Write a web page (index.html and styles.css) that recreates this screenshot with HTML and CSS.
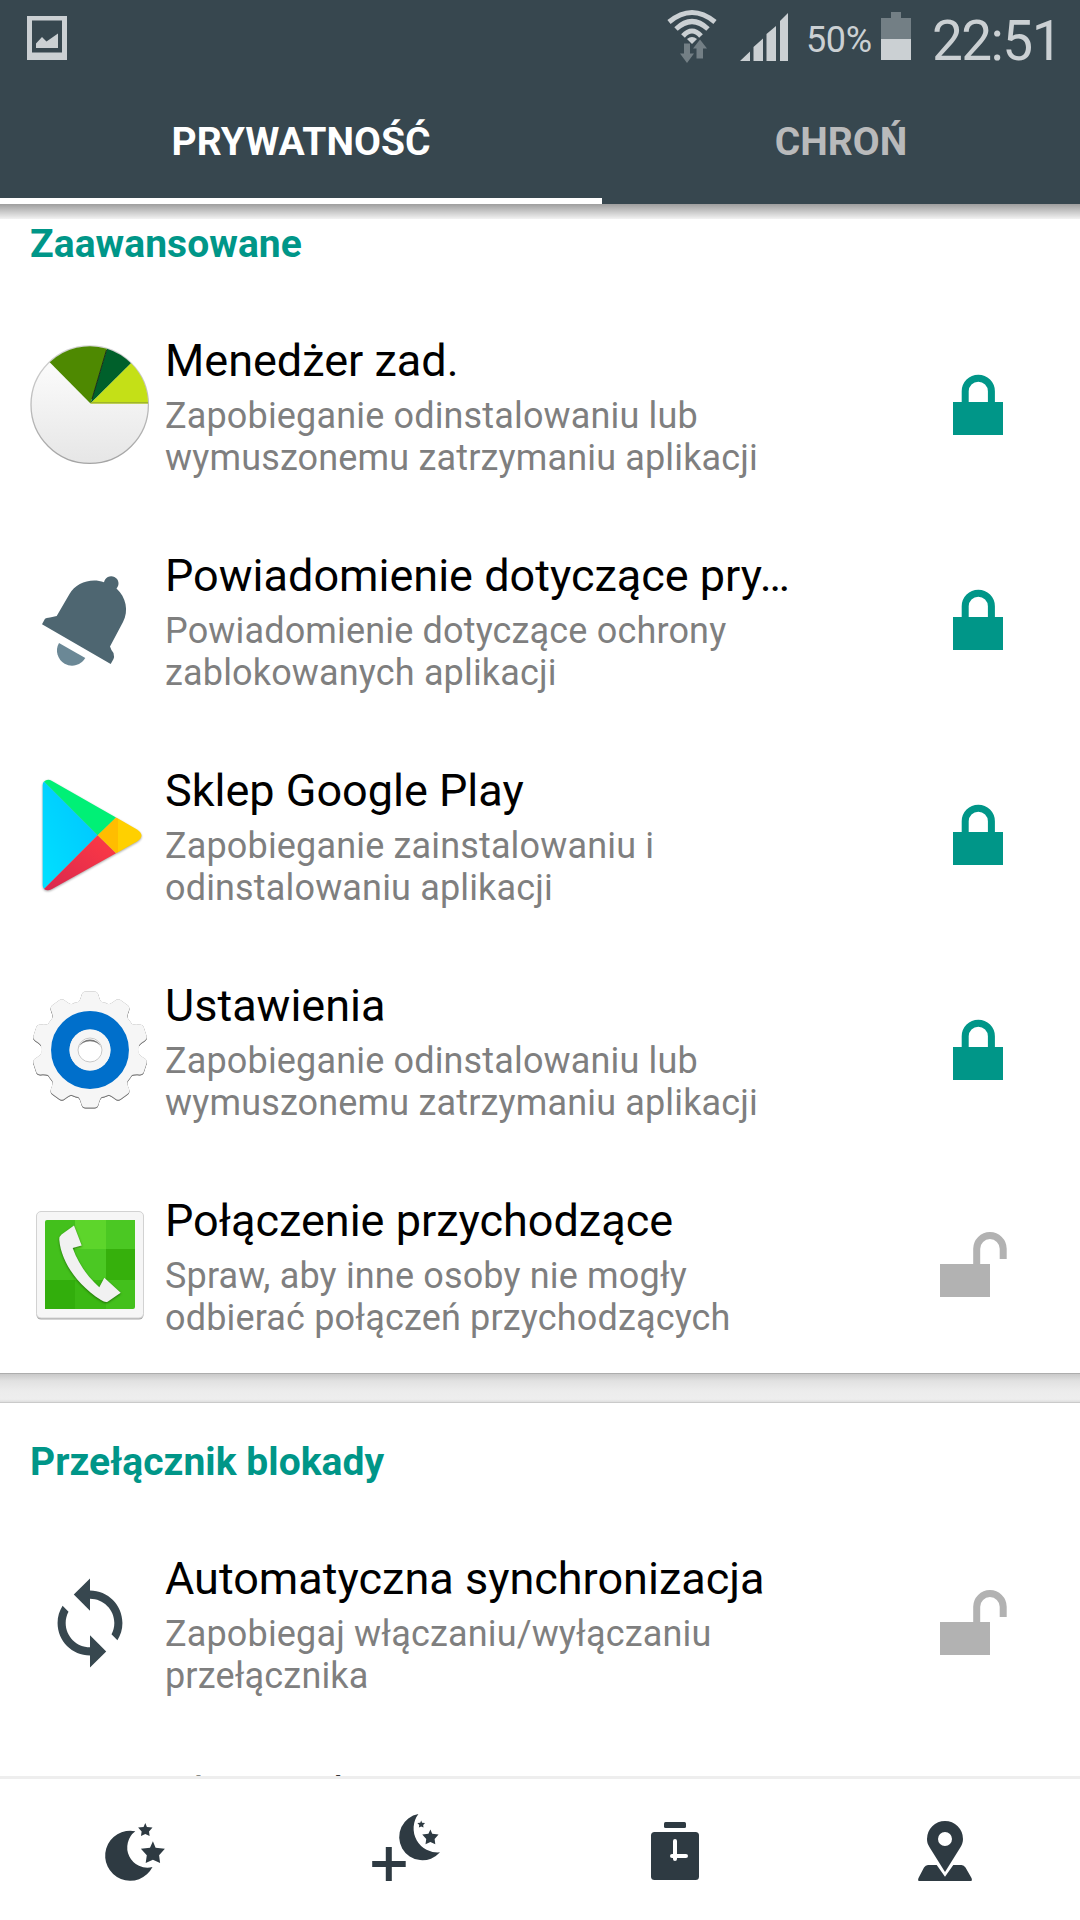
FILE: index.html
```html
<!DOCTYPE html>
<html lang="pl">
<head>
    <meta charset="UTF-8">
    <meta name="viewport" content="width=device-width, initial-scale=1.0">
    <title>Prywatność</title>
    <link rel="stylesheet" href="styles.css">
</head>
<body>
    <!-- shared shapes -->
    <svg class="defs" width="0" height="0">
        <symbol id="locked" viewBox="0 0 90 90">
            <rect x="23" y="44" width="50" height="33" fill="#009688"/>
            <path d="M35.2 45V33.3a13.1 13.1 0 0 1 26.2 0V45" fill="none" stroke="#009688" stroke-width="7"/>
        </symbol>
        <symbol id="unlocked" viewBox="0 0 90 90">
            <rect x="10" y="46" width="50" height="33" fill="#b2b2b2"/>
            <path d="M46.7 47V30.8a13.2 13.2 0 0 1 26.5 0V41" fill="none" stroke="#b2b2b2" stroke-width="7"/>
        </symbol>
        <path id="star" d="M0-13.7 2.7-7.3 12-6.3 6.2.3 7.2 8 0 4.7-7.2 8-6.1.3-12-6.3-2.9-7.3z"/>
        <path id="tooth" d="M-15-45C-11-47-10-49-8.500-54.500Q-7.500-58-4.500-58H4.500Q7.500-58 8.500-54.500C10-49 11-47 15-45z"/>
    </svg>

    <header class="header">
        <div class="status-bar">
            <svg class="picture-icon" width="40" height="44" viewBox="0 0 40 44">
                <path fill="#cbd0d3" fill-rule="evenodd" d="M0 0H40V44H0zM5 4.500V36.500H35V4.500z"/>
                <path fill="#cbd0d3" d="M9 27.500 15 21 19.500 25.500 31 17.500V32H9z"/>
            </svg>
            <div class="status-right">
                <svg width="50" height="56" viewBox="0 0 50 56">
                    <g fill="none" stroke="#cbd0d3" stroke-width="5">
                        <path d="M2 13Q25-6 48 13"/>
                        <path d="M9 20Q25 5 41 20"/>
                        <path d="M16 27Q25 17 34 27"/>
                    </g>
                    <path fill="#cbd0d3" d="M20 30Q25 26 30 30L25 35z"/>
                    <path fill="#737f85" d="M17 34.500H23V44.500H27L20 54 13 44.500H17zM29.500 49.500V39.500H26L33 30.500 40 39.500H36V49.500z"/>
                </svg>
                <svg class="signal" width="48" height="48" viewBox="0 0 48 48">
                    <path fill="#cbd0d3" d="M0 48 10 38.500V48zM13.500 48V34L23 25.500V48zM26.500 48V21L36 13V48zM40 48V8L48 0V48z"/>
                </svg>
                <span class="percent">50%</span>
                <svg class="battery" width="30" height="48" viewBox="0 0 30 48">
                    <path fill="#737f85" d="M10 0H20V6H30V27H0V6H10z"/>
                    <path fill="#cbd0d3" d="M0 27H30V48H0z"/>
                </svg>
                <span class="clock">22:51</span>
            </div>
        </div>
        <div class="tabs">
            <div class="tab active">PRYWATNOŚĆ</div>
            <div class="tab">CHROŃ</div>
        </div>
    </header>

    <main class="list">
        <section class="card first">
            <h2>Zaawansowane</h2>
            <div class="row">
                <svg class="icon" viewBox="0 0 120 120">
                    <defs>
                        <linearGradient id="pie" x1="0" y1="0" x2="0" y2="1">
                            <stop offset="0" stop-color="#fff"/>
                            <stop offset="1" stop-color="#e6e6e6"/>
                        </linearGradient>
                        <linearGradient id="pieEdge" x1="0" y1="0" x2="0" y2="1">
                            <stop offset="0" stop-color="#d4d4d4"/>
                            <stop offset="1" stop-color="#a4a4a4"/>
                        </linearGradient>
                    </defs>
                    <circle cx="59.700" cy="59.700" r="58.700" fill="url(#pie)" stroke="url(#pieEdge)" stroke-width="1.300"/>
                    <path fill="#4e8901" d="M60.500 58.500 19.700 17.300A58.500 58.500 0 0 1 77 3.700z"/>
                    <path fill="#00602b" d="M60.500 58.500 77 3.700A58.500 58.500 0 0 1 101 18.300z"/>
                    <path fill="#c4e017" d="M60.500 58.500 101 18.300A58.500 58.500 0 0 1 118 58.500z"/>
                    <path stroke="#1c2c16" d="M62 54 76.500 5"/>
                    <path stroke="#9fb52a" stroke-width="1.500" d="M61 57.800H118"/>
                </svg>
                <div class="text">
                    <h3>Menedżer zad.</h3>
                    <p>Zapobieganie odinstalowaniu lub wymuszonemu zatrzymaniu aplikacji</p>
                </div>
                <svg class="lock"><use href="#locked"/></svg>
            </div>
            <div class="row">
                <svg class="icon" viewBox="0 0 120 120">
                    <path fill="#4e6671" d="M12 64.300 15 58.800Q16 58 20 57.500L26.700 56 39.500 34C46 23 61 17.500 74 22.300A7.300 7.300 0 1 1 86.500 28.500C96 37 99 51 93 62L80 86.500Q81 90 83.500 93Q84.500 97 83.500 99L80.700 104z"/>
                    <path fill="#6b8896" d="M29 83A14.500 14.500 0 0 0 55.300 98z"/>
                </svg>
                <div class="text">
                    <h3>Powiadomienie dotyczące pry…</h3>
                    <p>Powiadomienie dotyczące ochrony zablokowanych aplikacji</p>
                </div>
                <svg class="lock"><use href="#locked"/></svg>
            </div>
            <div class="row">
                <svg class="icon play" viewBox="0 0 120 120">
                    <defs>
                        <linearGradient id="blue" x1="1" y1="0" x2="0" y2="1">
                            <stop offset="0" stop-color="#00c3ff"/>
                            <stop offset="1" stop-color="#00e1ff"/>
                        </linearGradient>
                        <linearGradient id="red" x1="1" y1="0" x2="0" y2="1">
                            <stop offset="0" stop-color="#ff3a44"/>
                            <stop offset="1" stop-color="#d9284f"/>
                        </linearGradient>
                    </defs>
                    <path fill="url(#blue)" d="M14 6.500Q12.700 7.500 12.700 10V110Q12.700 112.500 14 114L67.700 60.300z"/>
                    <path fill="#00f076" d="M14 6.500Q17.500 3.500 22 6L86 42.400 67.700 60.300z"/>
                    <path fill="url(#red)" d="M14 114Q17.500 116.500 22 114L86 78.300 67.700 60.300z"/>
                    <path fill="#ffbd00" d="M67.700 60.300 86 42.400 88 43.500V77.200L86 78.300z"/>
                    <path fill="#ffd000" d="M88 43.500 107 54.500Q116 60.500 107 66.500L88 77.200z"/>
                </svg>
                <div class="text">
                    <h3>Sklep Google Play</h3>
                    <p>Zapobieganie zainstalowaniu i odinstalowaniu aplikacji</p>
                </div>
                <svg class="lock"><use href="#locked"/></svg>
            </div>
            <div class="row">
                <svg class="icon" viewBox="0 0 120 120">
                    <g class="gear" transform="translate(60 59.500)" fill="#f6f6f6">
                        <circle r="49"/>
                        <use href="#tooth"/>
                        <use href="#tooth" transform="rotate(36)"/>
                        <use href="#tooth" transform="rotate(72)"/>
                        <use href="#tooth" transform="rotate(108)"/>
                        <use href="#tooth" transform="rotate(144)"/>
                        <use href="#tooth" transform="rotate(180)"/>
                        <use href="#tooth" transform="rotate(216)"/>
                        <use href="#tooth" transform="rotate(252)"/>
                        <use href="#tooth" transform="rotate(288)"/>
                        <use href="#tooth" transform="rotate(324)"/>
                    </g>
                    <circle cx="60" cy="60" r="29.700" fill="none" stroke="#006fcb" stroke-width="18.500"/>
                    <circle cx="60" cy="60" r="20.500" fill="#f6f6f6"/>
                    <circle cx="60" cy="60" r="12" fill="#fff" stroke="#c8c8c8"/>
                    <path fill="#777" d="M48.500 58A12 12 0 0 1 71.500 58A12.500 11 0 0 0 48.500 58z"/>
                </svg>
                <div class="text">
                    <h3>Ustawienia</h3>
                    <p>Zapobieganie odinstalowaniu lub wymuszonemu zatrzymaniu aplikacji</p>
                </div>
                <svg class="lock"><use href="#locked"/></svg>
            </div>
            <div class="row">
                <svg class="icon" viewBox="0 0 120 120">
                    <rect x="6.500" y="8" width="107" height="106.500" rx="4.500" fill="#aaa"/>
                    <rect x="6.500" y="6.500" width="107" height="106.500" rx="4.500" fill="#f6f6f6" stroke="#d2d2d2"/>
                    <rect x="15" y="15" width="90" height="89" rx="2" fill="#43c01c"/>
                    <path fill="#5dd52b" d="M45 15H76V44H45z"/>
                    <path fill="#4bc823" d="M76 15H105V44H76zM45 44H76V75H45z"/>
                    <path fill="#36b00c" d="M76 44H105V75H76z"/>
                    <path fill="#32ae0c" d="M15 75H45V104H15z"/>
                    <path fill="#3bb814" d="M45 75H76V104H45z"/>
                    <path class="handset" fill="#f1f1f1" d="M44 20.500 51.700 40.500 42.700 43C48 58 57 71 69.300 82.300L74.300 72.700 90.700 87.700 78 96.500Q75.500 98 71 95C47 80 31 56 29.300 35Q29 31.500 31.500 29.500z"/>
                </svg>
                <div class="text">
                    <h3>Połączenie przychodzące</h3>
                    <p>Spraw, aby inne osoby nie mogły odbierać połączeń przychodzących</p>
                </div>
                <svg class="lock"><use href="#unlocked"/></svg>
            </div>
        </section>

        <div class="divider"></div>

        <section class="card">
            <h2>Przełącznik blokady</h2>
            <div class="row">
                <svg class="icon" viewBox="-2.800 -2.800 29.600 29.600">
                    <path fill="#37474f" d="M12 4V1L8 5l4 4V6c3.310 0 6 2.690 6 6 0 1.010-.25 1.970-.7 2.800l1.460 1.460C19.540 15.030 20 13.570 20 12c0-4.420-3.580-8-8-8zm0 14c-3.310 0-6-2.690-6-6 0-1.010.25-1.970.7-2.800L5.240 7.740C4.460 8.970 4 10.430 4 12c0 4.420 3.580 8 8 8v3l4-4-4-4v3z"/>
                </svg>
                <div class="text">
                    <h3>Automatyczna synchronizacja</h3>
                    <p>Zapobiegaj włączaniu/wyłączaniu przełącznika</p>
                </div>
                <svg class="lock"><use href="#unlocked"/></svg>
            </div>
            <div class="row">
                <div class="icon"></div>
                <div class="text">
                    <h3>Bluetooth</h3>
                </div>
            </div>
        </section>
    </main>

    <nav class="bottom-nav">
        <svg viewBox="0 0 80 80">
            <path d="M40.300 19.300A25 25 0 1 0 57.500 55A20.200 20.200 0 0 1 40.300 19.300z"/>
            <use href="#star" transform="translate(50.300 19.300) scale(.6)"/>
            <use href="#star" transform="translate(57.900 43)"/>
        </svg>
        <svg viewBox="0 0 80 80">
            <path d="M53.400 2A23.300 23.300 0 1 0 75 40.300A24 24 0 0 1 53.400 2z"/>
            <use href="#star" transform="translate(56.200 13) scale(.32)"/>
            <use href="#star" transform="translate(65.400 26.800) scale(.68)"/>
            <path d="M20.800 35H26.800V49H40.700V55H26.800V69H20.800V55H7.200V49H20.800z"/>
        </svg>
        <svg viewBox="0 0 80 80">
            <rect x="29" y="10" width="22" height="6" rx="1.500"/>
            <rect x="16" y="20" width="48" height="48" rx="3.500"/>
            <path fill="none" stroke="#fff" stroke-width="4" stroke-linecap="round" d="M40 29V47M37 44H51"/>
        </svg>
        <svg viewBox="0 0 80 80">
            <path fill-rule="evenodd" d="M40 60 25 36C22.500 32 22 30 22 27A18 18 0 0 1 58 27C58 30 57 33 55 36zM40 20A7 7 0 1 0 40 34A7 7 0 1 0 40 20z"/>
            <path d="M31.700 53 40 64.700 48.300 53H56.500Q59 53 60.500 55.500L66.500 66Q67.500 69 66 69H14Q12.500 69 13.500 66L19 55.500Q20.500 53 23 53z"/>
        </svg>
    </nav>
</body>
</html>
```

FILE: styles.css
```css
* {
    box-sizing: border-box;
}
body {
    font-family: Roboto, sans-serif;
    margin: 0;
    height: 1920px;
    display: flex;
    flex-direction: column;
    background: #fff;
    overflow: hidden;
}
h2, h3, p {
    margin: 0;
}
svg {
    display: block;
}
.defs {
    position: absolute;
}

/* header */
.header {
    position: relative;
    z-index: 1;
    flex: none;
    height: 204px;
    background: #37474f;
}
.header::after {
    content: "";
    position: absolute;
    top: 100%;
    left: 0;
    right: 0;
    height: 15px;
    background: linear-gradient(rgba(0, 0, 0, 0.38), rgba(0, 0, 0, 0.05));
}
.status-bar {
    height: 76px;
    display: flex;
    justify-content: space-between;
    align-items: flex-start;
    padding: 0 24px 0 27px;
    color: #cbd0d3;
}
.picture-icon {
    margin-top: 16px;
}
.status-right {
    display: flex;
    align-items: flex-start;
    padding-top: 9px;
}
.signal {
    margin: 4px 0 0 23px;
}
.percent {
    width: 93px;
    padding-left: 18px;
    font-size: 36px;
    line-height: 42px;
    margin-top: 1px;
    letter-spacing: -0.4px;
    padding-top: 9px;
}
.battery {
    margin-top: 3px;
}
.clock {
    width: 145px;
    padding-left: 21px;
    font-size: 55px;
    line-height: 64px;
    letter-spacing: -1.6px;
    white-space: nowrap;
}
.tabs {
    display: flex;
    height: 128px;
}
.tab {
    width: 478px;
    padding-top: 43px;
    font-size: 39px;
    font-weight: bold;
    line-height: 46px;
    text-align: center;
    color: #b9babb;
}
.tab.active {
    width: 602px;
    color: #fff;
    border-bottom: 6px solid #fff;
}

/* list */
.list {
    flex: 1;
    min-height: 0;
    overflow: hidden;
}
.card.first {
    margin-top: -19px;
}
.card h2 {
    height: 113px;
    padding: 36px 30px 0;
    font-size: 39px;
    line-height: 46px;
    letter-spacing: 0.05px;
    color: #009688;
}
.row {
    display: flex;
    height: 215px;
    padding: 36px 60px 0 30px;
}
.icon {
    flex: none;
    width: 120px;
    height: 120px;
    margin-top: 11px;
}
.text {
    width: 650px;
    padding-left: 15px;
}
.text h3 {
    font-size: 45px;
    font-weight: normal;
    line-height: 53px;
    color: #000;
    white-space: nowrap;
}
.text p {
    margin-top: 8px;
    font-size: 36px;
    line-height: 42px;
    letter-spacing: 0.16px;
    color: #7f7f7f;
}
.lock {
    width: 90px;
    height: 90px;
    margin: 24px 0 0 auto;
}
.play {
    filter: drop-shadow(0 1px 1px rgba(0, 0, 0, 0.35));
}
.gear {
    filter: drop-shadow(0 0 0.7px #888) drop-shadow(0 1px 0.5px #777);
}
.handset {
    filter: drop-shadow(0 1.5px 1px rgba(20, 80, 0, 0.7));
}
.divider {
    height: 30px;
    border-top: 1px solid #adadad;
    border-bottom: 1px solid #cacaca;
    background: linear-gradient(#c9c9c9, #e1e1e1 25%, #ececec 60%, #eee 90%, #dedede);
}

/* bottom navigation */
.bottom-nav {
    flex: none;
    height: 144px;
    display: grid;
    grid-template-columns: repeat(4, 1fr);
    justify-items: center;
    padding-top: 33px;
    border-top: 3px solid #eee;
    background: #fff;
}
.bottom-nav svg {
    width: 80px;
    height: 80px;
    fill: #2e3a42;
}
```
